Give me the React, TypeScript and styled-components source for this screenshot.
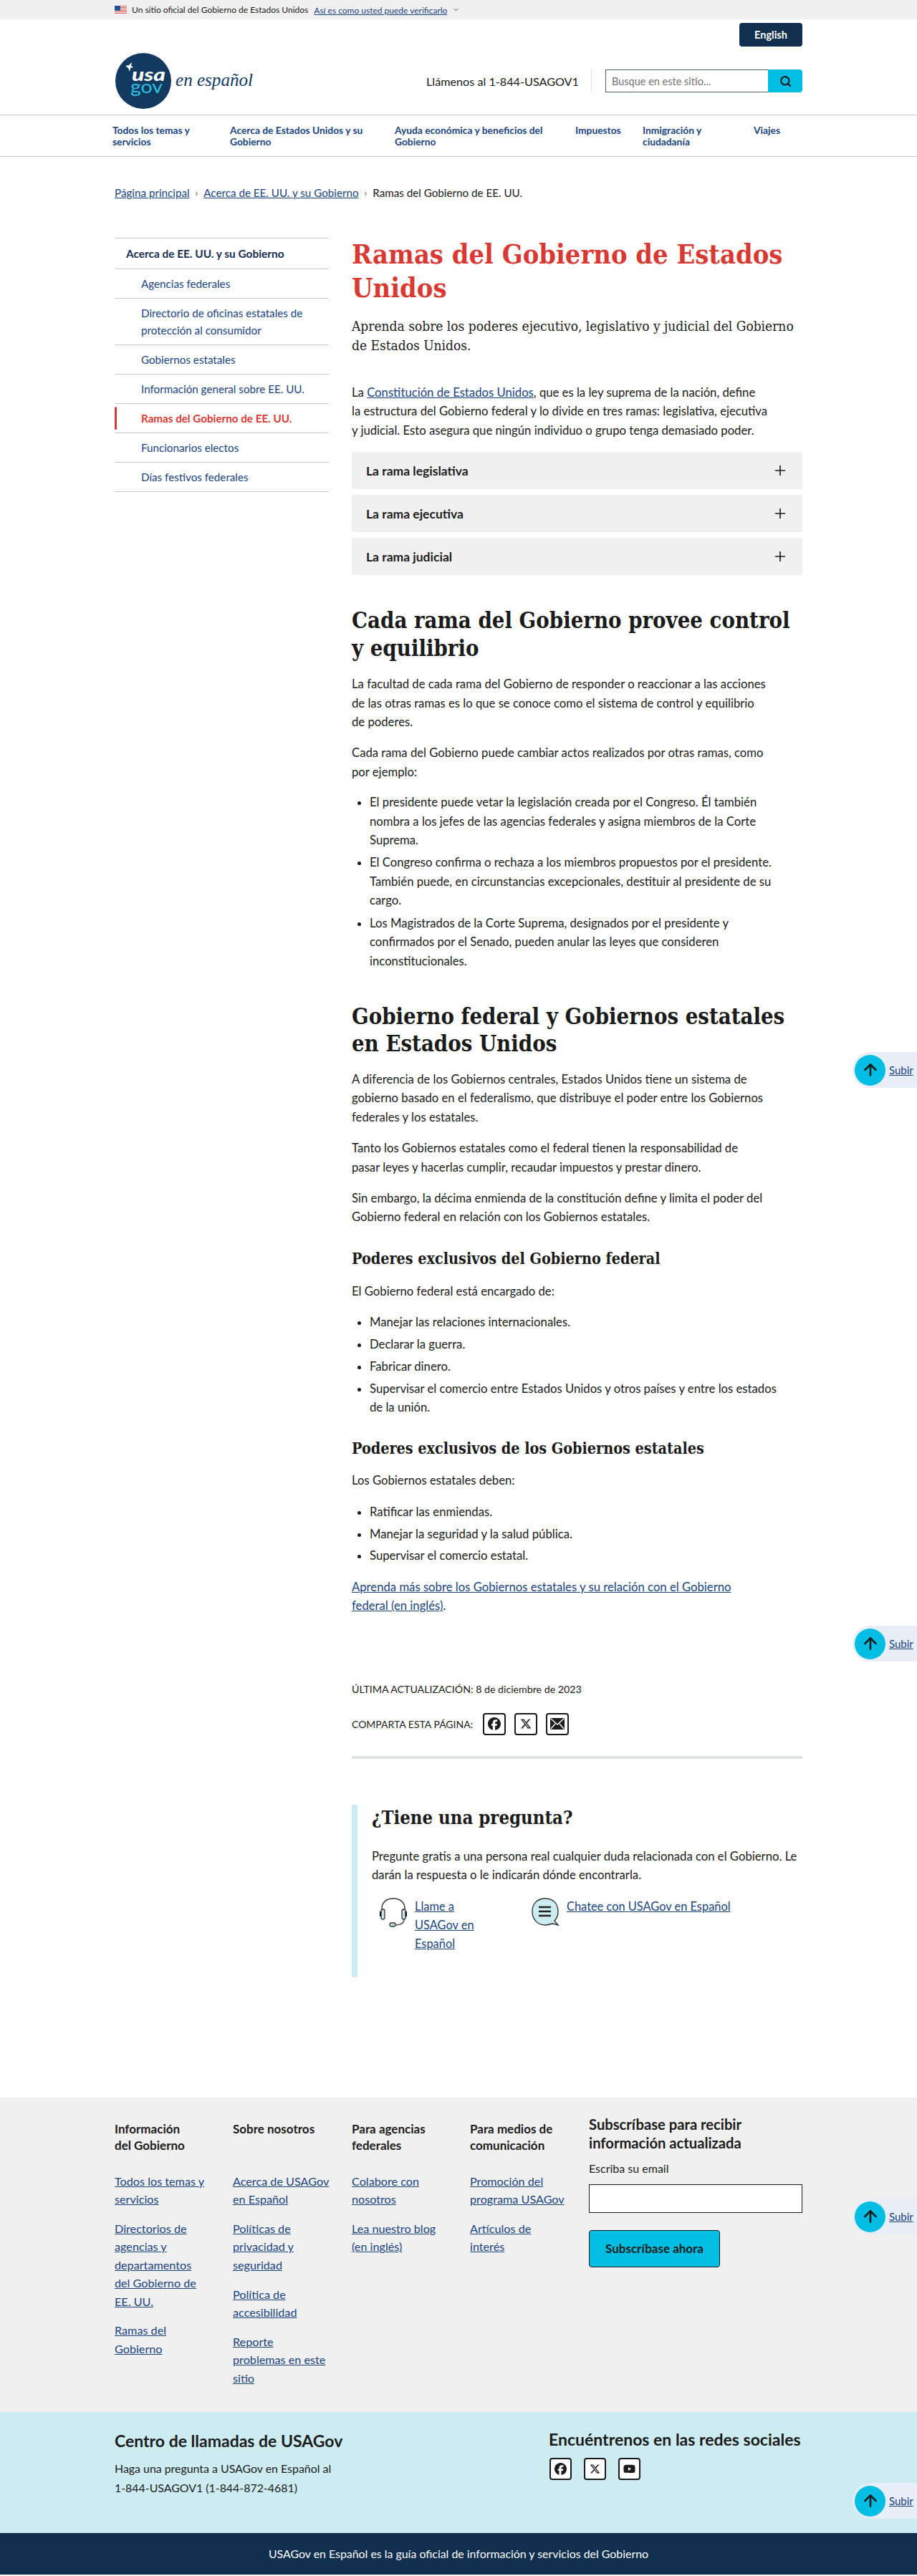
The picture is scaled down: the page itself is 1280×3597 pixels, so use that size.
import React from "react";
import styled, { createGlobalStyle } from "styled-components";
import { FaFacebook, FaXTwitter, FaYoutube } from "react-icons/fa6";
import { Plus, Search, ChevronDown, ArrowUp } from "lucide-react";

const SANS = `Lato, "Liberation Sans", sans-serif`;
const SERIF = `"DejaVu Serif Condensed", "Liberation Serif", serif`;
const LINK = "#1a4480";
const NAVY = "#112f4e";
const CYAN = "#00bde3";
const INK = "#1b1b1b";

const GlobalStyle = createGlobalStyle`
    html, body { margin: 0; padding: 0; background: #fff; }
    body { font-family: ${SANS}; color: ${INK}; font-size: 16px; }
    a { color: ${LINK}; }
    * { box-sizing: border-box; }
`;

const Page = styled.div`
    position: relative;
    width: 1280px;
    height: 3597px;
    overflow: hidden;
`;

const Banner = styled.div`
    height: 27px;
    background: #f0f0f0;
    padding-left: 160px;
    display: flex;
    align-items: center;
    gap: 7px;
    font-size: 12px;
    a { margin-left: 1px; padding-top: 2px; }
`;

const Header = styled.header`
    height: 133px;
    padding: 5px 160px 0;
`;

const LangRow = styled.div`
    display: flex;
    justify-content: flex-end;
`;

const LangButton = styled.button`
    width: 88px;
    height: 33px;
    background: ${NAVY};
    color: #fff;
    border: 0;
    border-radius: 4px;
    font: 700 14.5px ${SANS};
`;

const BrandRow = styled.div`
    margin-top: 9px;
    display: flex;
    align-items: flex-start;
    justify-content: space-between;
`;

const Tools = styled.div`
    margin-top: 23px;
    display: flex;
    align-items: center;
`;

const Phone = styled.div`
    font-size: 16.2px;
    width: 213px;
    white-space: nowrap;
`;

const ToolDivider = styled.div`
    width: 1px;
    height: 32px;
    background: #dfe1e2;
    margin: 0 19px 0 17px;
`;

const SearchInput = styled.input`
    width: 227px;
    height: 32px;
    border: 1px solid #565c65;
    border-right: 0;
    padding: 0 8px;
    font: 400 14.5px ${SANS};
    &::placeholder { color: #757575; opacity: 1; }
`;

const SearchButton = styled.button`
    width: 48px;
    height: 32px;
    background: ${CYAN};
    border: 0;
    border-radius: 0 4px 4px 0;
    display: flex;
    align-items: center;
    justify-content: center;
    color: ${INK};
`;

const Nav = styled.nav`
    height: 59px;
    border-top: 1px solid #c9c9c9;
    border-bottom: 1px solid #c9c9c9;
    padding: 13px 0 0 157px;
    display: flex;
`;

const NavItem = styled.a<{ $w: number }>`
    width: ${(p) => p.$w}px;
    font-size: 13.8px;
    font-weight: 700;
    line-height: 16px;
    color: ${LINK};
    text-decoration: none;
`;

const Crumbs = styled.div`
    margin: 40px 160px 0;
    height: 20px;
    line-height: 20px;
    display: flex;
    gap: 8px;
    font-size: 15.2px;
`;

const CrumbSep = styled.span`
    color: #565c65;
    font-size: 13px;
`;

const Columns = styled.div`
    margin: 51px 160px 0;
    display: flex;
    align-items: flex-start;
`;

const Side = styled.aside`
    width: 299px;
    margin: 2px 32px 0 0;
    border-top: 1px solid #c9c9c9;
`;

const SideHead = styled.div`
    padding: 9px 16px;
    border-bottom: 1px solid #c9c9c9;
    font-size: 15.4px;
    font-weight: 700;
    line-height: 24px;
    color: #162e51;
`;

const SideItem = styled.div<{ $active?: boolean }>`
    position: relative;
    padding: 8px 0 8px 37px;
    border-bottom: 1px solid #c9c9c9;
    font-size: 15.2px;
    line-height: 24px;
    font-weight: ${(p) => (p.$active ? 700 : 400)};
    color: ${(p) => (p.$active ? "#d83933" : LINK)};
    ${(p) =>
        p.$active &&
        `&::before {
            content: "";
            position: absolute;
            left: 0;
            top: 4px;
            bottom: 4px;
            width: 3px;
            border-radius: 2px;
            background: #d83933;
        }`}
`;

const Main = styled.main`
    width: 629px;
`;

const Title = styled.h1`
    margin: 0;
    padding-top: 2px;
    font: 700 37.7px/47px ${SERIF};
    color: #d83933;
`;

const Lead = styled.p`
    margin: 16px 0 0;
    font: 400 19px/27px ${SERIF};
`;

const Para = styled.p<{ $mt?: number }>`
    margin: ${(p) => p.$mt ?? 17}px 0 0;
    font-size: 16.7px;
    line-height: 26.4px;
`;

const Accordion = styled.div`
    margin-top: 17px;
    display: flex;
    flex-direction: column;
    gap: 8px;
`;

const AccordionRow = styled.div`
    height: 52px;
    background: #f0f0f0;
    padding: 0 20px;
    display: flex;
    align-items: center;
    justify-content: space-between;
    font-size: 17.5px;
    font-weight: 700;
`;

const H2 = styled.h2<{ $mt: number }>`
    margin: ${(p) => p.$mt}px 0 0;
    font: 700 30.8px/38.5px ${SERIF};
`;

const H3 = styled.h3<{ $mt: number }>`
    margin: ${(p) => p.$mt}px 0 0;
    padding-top: 2px;
    font: 700 21.4px/28px ${SERIF};
`;

const List = styled.ul<{ $gap: number; $mt?: number }>`
    margin: ${(p) => p.$mt ?? 17}px 0 0;
    padding: 0 0 0 25px;
    li { font-size: 16.7px; line-height: 26.4px; }
    li + li { margin-top: ${(p) => p.$gap}px; }
`;

const Updated = styled.div`
    margin-top: 93px;
    font-size: 14.2px;
    line-height: 20px;
`;

const ShareRow = styled.div`
    margin-top: 23px;
    display: flex;
    align-items: center;
    gap: 13px;
    font-size: 14px;
`;

const IconBox = styled.a<{ $w: number }>`
    width: ${(p) => p.$w}px;
    height: 31px;
    border: 2px solid ${INK};
    border-radius: 4px;
    background: #fff;
    color: ${INK};
    display: flex;
    align-items: center;
    justify-content: center;
`;

const ShareIcons = styled.div`
    display: flex;
    gap: 12px;
    margin-left: 1px;
`;

const Rule = styled.div`
    margin-top: 29px;
    height: 4px;
    background: #dfe1e2;
`;

const Question = styled.section`
    margin-top: 64px;
    height: 241px;
    border-left: 8px solid #ccecf2;
    padding-left: 20px;
`;

const QuestionTitle = styled.h2`
    margin: 0;
    font: 700 25.5px/36px ${SERIF};
`;

const Actions = styled.div`
    margin-top: 18px;
    padding-left: 9px;
    display: flex;
`;

const Action = styled.div<{ $w: number }>`
    width: ${(p) => p.$w}px;
    display: flex;
    gap: 9px;
    align-items: flex-start;
    font-size: 16.4px;
    line-height: 26px;
`;

const ActionText = styled.a<{ $w: number }>`
    width: ${(p) => p.$w}px;
`;

const FooterLinks = styled.div`
    margin-top: 168px;
    height: 439px;
    background: #f0f0f0;
    padding: 24px 160px 0;
    display: grid;
    grid-template-columns: 165px 166px 165px 166px 298px;
`;

const FooterCol = styled.div`
    padding-top: 8px;
`;

const FooterTitle = styled.div`
    min-height: 46px;
    margin-bottom: 26px;
    font-size: 17px;
    font-weight: 700;
    line-height: 23px;
    white-space: pre-line;
`;

const FooterLink = styled.a`
    display: block;
    font-size: 16.2px;
    line-height: 25.4px;
    white-space: pre-line;
    & + & { margin-top: 15.5px; }
`;

const SubTitle = styled.div`
    font-size: 20.2px;
    font-weight: 700;
    line-height: 26px;
`;

const SubLabel = styled.div`
    margin-top: 13px;
    font-size: 16px;
    line-height: 20px;
`;

const SubInput = styled.input`
    display: block;
    margin-top: 12px;
    width: 298px;
    height: 40px;
    border: 1px solid ${INK};
    background: #fff;
`;

const SubButton = styled.button`
    display: block;
    margin-top: 24px;
    width: 183px;
    height: 52px;
    background: ${CYAN};
    border: 1px solid ${INK};
    border-radius: 4px;
    font: 700 17px ${SANS};
    color: ${INK};
`;

const Contact = styled.div`
    height: 169px;
    background: #ccecf2;
    padding: 25px 160px 0;
    display: flex;
    justify-content: space-between;
`;

const ContactTitle = styled.div`
    font-size: 23px;
    font-weight: 700;
    line-height: 30px;
    white-space: nowrap;
`;

const ContactText = styled.p`
    margin: 10px 0 0;
    font-size: 15.9px;
    line-height: 27px;
`;

const SocialBlock = styled.div`
    width: 354px;
    margin-top: -2px;
`;

const SocialIcons = styled.div`
    margin: 11px 0 0 1px;
    display: flex;
    gap: 17px;
`;

const Tagline = styled.div`
    height: 58px;
    background: ${NAVY};
    color: #fff;
    font-size: 15.9px;
    display: flex;
    align-items: center;
    justify-content: center;
`;

const BackTop = styled.div<{ $top: number }>`
    position: absolute;
    top: ${(p) => p.$top}px;
    left: 1190px;
    width: 90px;
    height: 50px;
    padding-left: 3px;
    background: #e7eef7;
    border-radius: 25px 0 0 25px;
    display: flex;
    align-items: center;
    gap: 5px;
    font-size: 15px;
`;

const BackCircle = styled.div`
    width: 43px;
    height: 43px;
    border-radius: 50%;
    background: ${CYAN};
    color: ${INK};
    display: flex;
    align-items: center;
    justify-content: center;
`;

function Flag() {
    return (
        <svg width="17" height="12" viewBox="0 0 17 12">
            <rect width="17" height="12" fill="#fff" />
            {[0, 2, 4, 6, 8, 10].map((y) => (
                <rect key={y} y={y} width="17" height="1" fill="#d9534f" />
            ))}
            <rect width="8" height="7" fill="#2a4f8f" />
        </svg>
    );
}

function Logo() {
    return (
        <svg width="200" height="78" viewBox="0 0 200 78">
            <circle cx="40" cy="39" r="39" fill="#123a60" />
            <path d="M15 18l5-1 4-4-1 5 3 2-4 1-1 5-2-5z" fill="#fff" />
            <text x="24" y="39" textLength="47" lengthAdjust="spacingAndGlyphs" fontFamily="Lato, sans-serif" fontWeight="900" fontStyle="italic" fontSize="24" fill="#fff">usa</text>
            <text x="22" y="56" textLength="45" lengthAdjust="spacingAndGlyphs" fontFamily="Lato, sans-serif" fontSize="25" fill="#2cc0e0">gov</text>
            <text x="85" y="46" textLength="108" lengthAdjust="spacingAndGlyphs" fontFamily="'Liberation Serif', serif" fontStyle="italic" fontSize="25" fill="#123a60">en español</text>
        </svg>
    );
}

function MailIcon() {
    return (
        <svg width="20" height="16" viewBox="0 0 20 16">
            <rect width="20" height="16" rx="1.5" fill={INK} />
            <path d="M1 1l9 8 9-8M1 15l6-7M19 15l-6-7" fill="none" stroke="#fff" strokeWidth="1.4" />
        </svg>
    );
}

function HeadsetIcon() {
    return (
        <svg width="42" height="42" viewBox="0 0 42 42" fill="none" stroke="#333" strokeWidth="1.3">
            <path d="M5 20V16C5 7 12 2 21 2s16 5 16 14v4" />
            <rect x="4" y="17" width="5" height="14" rx="2.5" fill="#c8e6ef" />
            <rect x="33" y="17" width="5" height="14" rx="2.5" fill="#c8e6ef" />
            <path d="M3 20v7M39 20v7" stroke="#111" strokeWidth="2" />
            <path d="M36 31c0 6-6 8-13 8" />
            <rect x="16" y="36" width="8" height="5" rx="2.5" fill="#c8e6ef" />
        </svg>
    );
}

function ChatIcon() {
    return (
        <svg width="42" height="42" viewBox="0 0 42 42">
            <path d="M21 2C10 2 3 9 3 20s7 19 18 19c4 0 7-1 10-2l8 2-5-6c3-3 5-8 5-13C39 9 32 2 21 2z" fill="#ccecf2" stroke="#333" strokeWidth="1.4" />
            <path d="M12 14h17M12 20h17M12 26h17" stroke="#222" strokeWidth="2.4" />
        </svg>
    );
}

function BackToTop({ top }: { top: number }) {
    return (
        <BackTop $top={top}>
            <BackCircle>
                <ArrowUp size={26} strokeWidth={2.4} />
            </BackCircle>
            <a href="#top">Subir</a>
        </BackTop>
    );
}

const SIDE_ITEMS = [
    "Agencias federales",
    "Directorio de oficinas estatales de protección al consumidor",
    "Gobiernos estatales",
    "Información general sobre EE. UU.",
    "Ramas del Gobierno de EE. UU.",
    "Funcionarios electos",
    "Días festivos federales",
];

const FOOTER = [
    {
        title: "Información\ndel Gobierno",
        links: ["Todos los temas y\nservicios", "Directorios de\nagencias y\ndepartamentos\ndel Gobierno de\nEE. UU.", "Ramas del\nGobierno"],
    },
    {
        title: "Sobre nosotros",
        links: ["Acerca de USAGov\nen Español", "Políticas de\nprivacidad y\nseguridad", "Política de\naccesibilidad", "Reporte\nproblemas en este\nsitio"],
    },
    {
        title: "Para agencias\nfederales",
        links: ["Colabore con\nnosotros", "Lea nuestro blog\n(en inglés)"],
    },
    {
        title: "Para medios de\ncomunicación",
        links: ["Promoción del\nprograma USAGov", "Artículos de\ninterés"],
    },
];

export default function App() {
    return (
        <Page>
            <GlobalStyle />
            <Banner>
                <Flag />
                <span>Un sitio oficial del Gobierno de Estados Unidos</span>
                <a href="#v">Así es como usted puede verificarlo</a>
                <ChevronDown size={11} color={LINK} />
            </Banner>
            <Header>
                <LangRow>
                    <LangButton>English</LangButton>
                </LangRow>
                <BrandRow>
                    <Logo />
                    <Tools>
                        <Phone>Llámenos al 1-844-USAGOV1</Phone>
                        <ToolDivider />
                        <SearchInput placeholder="Busque en este sitio..." />
                        <SearchButton>
                            <Search size={17} strokeWidth={3} />
                        </SearchButton>
                    </Tools>
                </BrandRow>
            </Header>
            <Nav>
                <NavItem $w={164}>Todos los temas y<br />servicios</NavItem>
                <NavItem $w={230}>Acerca de Estados Unidos y su<br />Gobierno</NavItem>
                <NavItem $w={252}>Ayuda económica y beneficios del<br />Gobierno</NavItem>
                <NavItem $w={94}>Impuestos</NavItem>
                <NavItem $w={155}>Inmigración y<br />ciudadanía</NavItem>
                <NavItem $w={60}>Viajes</NavItem>
            </Nav>
            <Crumbs>
                <a href="#h">Página principal</a>
                <CrumbSep>›</CrumbSep>
                <a href="#a">Acerca de EE. UU. y su Gobierno</a>
                <CrumbSep>›</CrumbSep>
                <span>Ramas del Gobierno de EE. UU.</span>
            </Crumbs>
            <Columns>
                <Side>
                    <SideHead>Acerca de EE. UU. y su Gobierno</SideHead>
                    {SIDE_ITEMS.map((item) => (
                        <SideItem key={item} $active={item.startsWith("Ramas")}>{item}</SideItem>
                    ))}
                </Side>
                <Main>
                    <Title>Ramas del Gobierno de Estados Unidos</Title>
                    <Lead>Aprenda sobre los poderes ejecutivo, legislativo y judicial del Gobierno<br />de Estados Unidos.</Lead>
                    <Para $mt={39}>
                        La <a href="#c">Constitución de Estados Unidos</a>, que es la ley suprema de la nación, define<br />
                        la estructura del Gobierno federal y lo divide en tres ramas: legislativa, ejecutiva<br />
                        y judicial. Esto asegura que ningún individuo o grupo tenga demasiado poder.
                    </Para>
                    <Accordion>
                        {["La rama legislativa", "La rama ejecutiva", "La rama judicial"].map((label) => (
                            <AccordionRow key={label}>
                                {label}
                                <Plus size={22} strokeWidth={1.8} />
                            </AccordionRow>
                        ))}
                    </Accordion>
                    <H2 $mt={44}>Cada rama del Gobierno provee control<br />y equilibrio</H2>
                    <Para $mt={18}>
                        La facultad de cada rama del Gobierno de responder o reaccionar a las acciones<br />
                        de las otras ramas es lo que se conoce como el sistema de control y equilibrio<br />
                        de poderes.
                    </Para>
                    <Para>Cada rama del Gobierno puede cambiar actos realizados por otras ramas, como<br />por ejemplo:</Para>
                    <List $gap={5} $mt={16}>
                        <li>El presidente puede vetar la legislación creada por el Congreso. Él también<br />nombra a los jefes de las agencias federales y asigna miembros de la Corte<br />Suprema.</li>
                        <li>El Congreso confirma o rechaza a los miembros propuestos por el presidente.<br />También puede, en circunstancias excepcionales, destituir al presidente de su<br />cargo.</li>
                        <li>Los Magistrados de la Corte Suprema, designados por el presidente y<br />confirmados por el Senado, pueden anular las leyes que consideren<br />inconstitucionales.</li>
                    </List>
                    <H2 $mt={45}>Gobierno federal y Gobiernos estatales<br />en Estados Unidos</H2>
                    <Para>
                        A diferencia de los Gobiernos centrales, Estados Unidos tiene un sistema de<br />
                        gobierno basado en el federalismo, que distribuye el poder entre los Gobiernos<br />
                        federales y los estatales.
                    </Para>
                    <Para>Tanto los Gobiernos estatales como el federal tienen la responsabilidad de<br />pasar leyes y hacerlas cumplir, recaudar impuestos y prestar dinero.</Para>
                    <Para>Sin embargo, la décima enmienda de la constitución define y limita el poder del<br />Gobierno federal en relación con los Gobiernos estatales.</Para>
                    <H3 $mt={29}>Poderes exclusivos del Gobierno federal</H3>
                    <Para $mt={18}>El Gobierno federal está encargado de:</Para>
                    <List $gap={4.4}>
                        <li>Manejar las relaciones internacionales.</li>
                        <li>Declarar la guerra.</li>
                        <li>Fabricar dinero.</li>
                        <li>Supervisar el comercio entre Estados Unidos y otros países y entre los estados<br />de la unión.</li>
                    </List>
                    <H3 $mt={29}>Poderes exclusivos de los Gobiernos estatales</H3>
                    <Para>Los Gobiernos estatales deben:</Para>
                    <List $gap={4.4}>
                        <li>Ratificar las enmiendas.</li>
                        <li>Manejar la seguridad y la salud pública.</li>
                        <li>Supervisar el comercio estatal.</li>
                    </List>
                    <Para>
                        <a href="#m">Aprenda más sobre los Gobiernos estatales y su relación con el Gobierno<br />federal (en inglés)</a>.
                    </Para>
                    <Updated>ÚLTIMA ACTUALIZACIÓN: 8 de diciembre de 2023</Updated>
                    <ShareRow>
                        COMPARTA ESTA PÁGINA:
                        <ShareIcons>
                            <IconBox $w={32}><FaFacebook size={18} /></IconBox>
                            <IconBox $w={32}><FaXTwitter size={16} /></IconBox>
                            <IconBox $w={32}><MailIcon /></IconBox>
                        </ShareIcons>
                    </ShareRow>
                    <Rule />
                    <Question>
                        <QuestionTitle>¿Tiene una pregunta?</QuestionTitle>
                        <Para $mt={23}>
                            Pregunte gratis a una persona real cualquier duda relacionada con el Gobierno. Le<br />
                            darán la respuesta o le indicarán dónde encontrarla.
                        </Para>
                        <Actions>
                            <Action $w={212}>
                                <HeadsetIcon />
                                <ActionText $w={90} href="#l">Llame a USAGov en Español</ActionText>
                            </Action>
                            <Action $w={320}>
                                <ChatIcon />
                                <ActionText $w={260} href="#ch">Chatee con USAGov en Español</ActionText>
                            </Action>
                        </Actions>
                    </Question>
                </Main>
            </Columns>
            <FooterLinks>
                {FOOTER.map((col) => (
                    <FooterCol key={col.title}>
                        <FooterTitle>{col.title}</FooterTitle>
                        {col.links.map((link) => (
                            <FooterLink key={link} href="#f">{link}</FooterLink>
                        ))}
                    </FooterCol>
                ))}
                <div>
                    <SubTitle>Subscríbase para recibir<br />información actualizada</SubTitle>
                    <SubLabel>Escriba su email</SubLabel>
                    <SubInput />
                    <SubButton>Subscríbase ahora</SubButton>
                </div>
            </FooterLinks>
            <Contact>
                <div>
                    <ContactTitle>Centro de llamadas de USAGov</ContactTitle>
                    <ContactText>Haga una pregunta a USAGov en Español al<br />1-844-USAGOV1 (1-844-872-4681)</ContactText>
                </div>
                <SocialBlock>
                    <ContactTitle>Encuéntrenos en las redes sociales</ContactTitle>
                    <SocialIcons>
                        <IconBox $w={31}><FaFacebook size={17} /></IconBox>
                        <IconBox $w={31}><FaXTwitter size={15} /></IconBox>
                        <IconBox $w={31}><FaYoutube size={17} /></IconBox>
                    </SocialIcons>
                </SocialBlock>
            </Contact>
            <Tagline>USAGov en Español es la guía oficial de información y servicios del Gobierno</Tagline>
            {[1469, 2270, 3070, 3467].map((top) => (
                <BackToTop key={top} top={top} />
            ))}
        </Page>
    );
}
